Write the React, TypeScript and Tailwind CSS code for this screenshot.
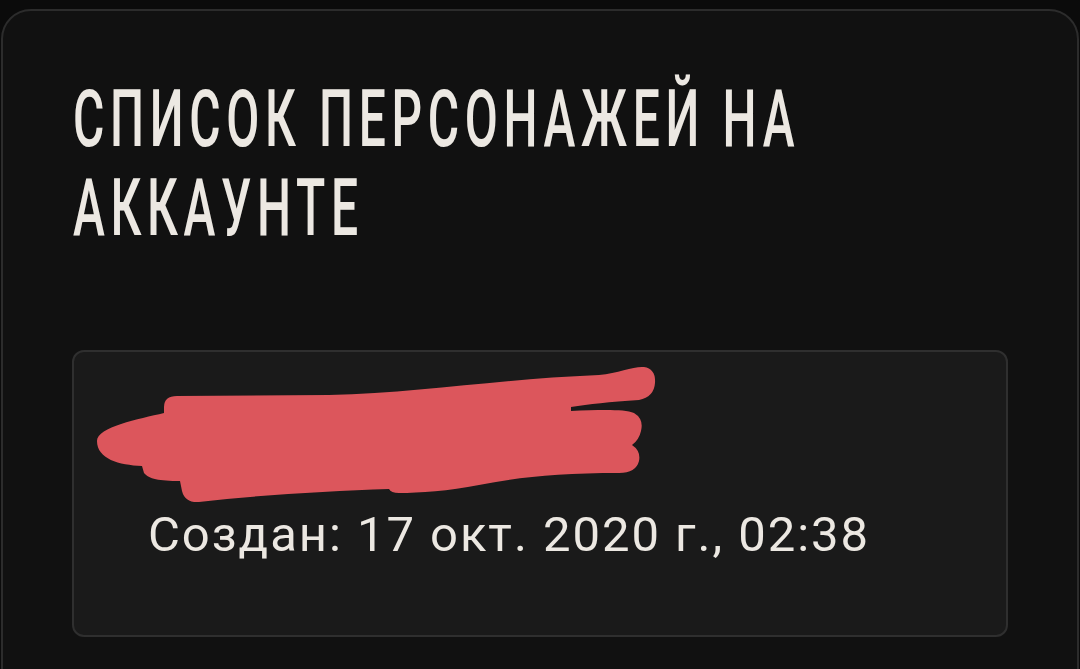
const Scribble = () => (
  <svg width="580" height="145" viewBox="0 0 580 145" className="block">
    <g transform="translate(-95,-365)">
      <path
        d="M 98,442
           C 98,428 140,420 165,414
           L 165,408 Q 165,397 178,397
           L 330,396
           C 420,394 500,380 600,376
           C 620,374 635,367 645,368
           Q 657,370 656,384
           Q 655,398 640,401
           C 610,403 590,405 572,408
           L 572,412
           C 600,411 625,410 635,414
           Q 645,420 642,432
           Q 640,441 633,446
           Q 642,452 640,462
           Q 637,474 620,474
           C 560,474 520,478 480,486
           C 450,492 420,494 400,494
           Q 392,494 390,490
           C 330,492 260,496 200,503
           Q 186,504 183,492
           L 181,482
           C 160,482 150,480 145,474
           L 143,467
           C 120,466 98,460 98,442 Z"
        fill="#dc565c"
      />
    </g>
  </svg>
);

const App: React.FC = () => {
  const titleLines = ['СПИСОК ПЕРСОНАЖЕЙ НА', 'АККАУНТЕ'];

  return (
    <div className="h-[669px] bg-[#0b0b0b] pt-[9px] px-[1px] overflow-hidden">
      <div className="min-h-[700px] rounded-[30px] border-2 border-[#2c2c2c] bg-[#111111] pt-[63px]">
        <div className="pl-[70px]" style={{ fontFamily: 'Roboto, sans-serif' }}>
          {titleLines.map((line) => (
            <div key={line} className="h-[89px] whitespace-nowrap">
              <span className="inline-block origin-left scale-x-[0.6] text-[80px] leading-[90px] font-medium tracking-[9.4px] text-[#ece8e2]">
                {line}
              </span>
            </div>
          ))}
        </div>

        <div className="mx-[69px] mt-[98px] rounded-[12px] border-2 border-[#2f2f2f] bg-[#1a1a1a] pt-[12px] pb-[72px]">
          <div className="ml-[20px]">
            <Scribble />
          </div>
          <p
            className="mt-[-2px] pl-[74px] text-[49px] leading-[56px] tracking-[0.04em] text-[#ece8e2]"
            style={{ fontFamily: 'Roboto, sans-serif' }}
          >
            Создан: 17 окт. 2020 г., 02:38
          </p>
        </div>
      </div>
    </div>
  );
};

export default App;
